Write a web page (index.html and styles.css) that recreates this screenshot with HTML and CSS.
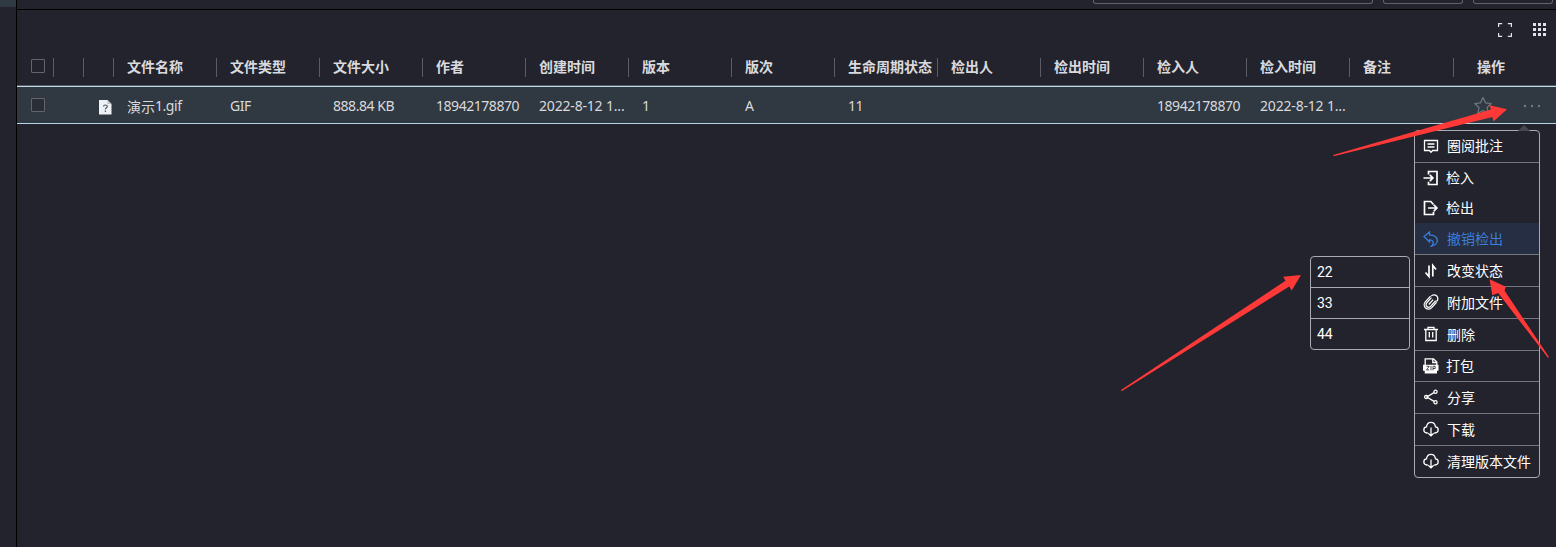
FILE: index.html
```html
<!DOCTYPE html>
<html lang="zh-CN">
<head>
<meta charset="utf-8">
<title>文件列表</title>
<link rel="stylesheet" href="styles.css">
</head>
<body>
<div class="app">
  <aside class="side"><div class="side-active"></div></aside>
  <main class="main">
    <div class="filters"><span class="field field-wide"></span><span class="field"></span><span class="field"></span></div>
    <div class="tools">
      <svg width="14" height="14" viewBox="0 0 14 14" fill="none" stroke="#e2e2e8" stroke-width="1.2"><path d="M.6 4V.6H4.200M9.800.6h3.600V4M13.400 10v3.400H9.800M4.200 13.400H.6V10"/></svg>
      <svg width="14" height="14" viewBox="0 0 14 14" fill="#e2e2e8"><path d="M0 0h3v3H0zM5 0h3v3H5zM10 0h3v3h-3zM0 5h3v3H0zM5 5h3v3H5zM10 5h3v3h-3zM0 10h3v3H0zM5 10h3v3H5zM10 10h3v3h-3z"/></svg>
    </div>
    <div class="grid head">
      <div class="cell check"><i class="box"></i></div><div class="cell"></div><div class="cell"></div>
      <div class="cell">文件名称</div><div class="cell">文件类型</div><div class="cell">文件大小</div><div class="cell">作者</div><div class="cell">创建时间</div><div class="cell">版本</div><div class="cell">版次</div><div class="cell">生命周期状态</div><div class="cell">检出人</div><div class="cell">检出时间</div><div class="cell">检入人</div><div class="cell">检入时间</div><div class="cell">备注</div><div class="cell ops">操作</div>
    </div>
    <div class="grid row">
      <div class="cell check"><i class="box"></i></div><div class="cell"></div>
      <div class="cell file"><svg width="13" height="15" viewBox="0 0 13 15"><path d="M0 0h8.500L12.500 4V14.500H0z" fill="#eef1f6"/><path d="M8.500 0v4h4z" fill="#b9c0c8"/><path d="M4.500 6.500c0-2 3.800-2 3.800 0 0 1.400-1.900 1.300-1.900 2.900M6.400 10.600v1.300" fill="none" stroke="#525b66" stroke-width="1.200"/></svg></div>
      <div class="cell"><span class="zh">演示</span>1.gif</div><div class="cell">GIF</div><div class="cell">888.84 KB</div><div class="cell">18942178870</div><div class="cell date">2022-8-12 1...</div><div class="cell">1</div><div class="cell">A</div><div class="cell">11</div><div class="cell"></div><div class="cell"></div><div class="cell">18942178870</div><div class="cell date">2022-8-12 1...</div><div class="cell"></div>
      <div class="cell actions">
        <svg width="18" height="18" viewBox="0 0 18 18" fill="none" stroke="#747980" stroke-width="1.200" stroke-linejoin="round"><path d="M9 .5l2.500 5.300 5.700.7-4.200 4 1.200 5.800L9 13.500l-5.200 2.800L5 10.500l-4.200-4 5.700-.7z"/></svg>
        <svg width="18" height="4" viewBox="0 0 18 4" fill="#747980"><circle cx="2" cy="2" r="1.200"/><circle cx="9" cy="2" r="1.200"/><circle cx="16" cy="2" r="1.200"/></svg>
      </div>
    </div>
  </main>
</div>

<div class="submenu"><div>22</div><div>33</div><div>44</div></div>

<div class="menu">
  <i class="caret"></i>
  <div class="item line h32 first"><svg class="icon" viewBox="0 0 16 16"><path d="M1.500 2.500h13v10H9.600L8 14.300l-1.600-1.800H1.500zM4.500 6h7M4.500 9h7"/></svg><span>圈阅批注</span></div>
  <div class="item h30 near"><svg class="icon bold" viewBox="0 0 16 16"><path d="M5.500 4.500V1.500H14v13H5.500V11.800M.5 8H9.500M6.800 4.900L9.900 8l-3.100 3.100"/></svg><span>检入</span></div>
  <div class="item h30 near"><svg class="icon bold" viewBox="0 0 16 16"><path d="M10.500 4.500L7.800 1.500H1.500v13h9V11.800M5 8h8.500M10.800 4.900L13.900 8l-3.100 3.100"/></svg><span>检出</span></div>
  <div class="item line h32 active"><svg class="icon" viewBox="0 0 16 16"><path d="M1 5.500L6.500 1v2.800c5.500 0 8.300 3 7.800 6.200-.4 2.600-2.500 4.400-5.800 5 2.700-2.400 2.500-6-2-6.200V11z"/></svg><span>撤销检出</span></div>
  <div class="item line h32"><svg class="icon bold" viewBox="0 0 16 16"><path d="M6 2.500v11L2.500 9.500M9.800 13.500v-11l3.200 4"/></svg><span>改变状态</span></div>
  <div class="item line h32"><svg class="icon up" viewBox="0 0 16 16"><g transform="rotate(42 8 8)"><path d="M5.400 4.500v7a2.600 2.600 0 0 0 5.200 0V3.800"/><path d="M10.600 4v-.5a3.800 3.800 0 0 0-7.600 0" transform="translate(1.200 0)"/><path d="M8 4.800v6.500M12.300 4.500v7.200a4.300 4.300 0 0 1-8.600 0V4"/></g></svg><span>附加文件</span></div>
  <div class="item line h32"><svg class="icon up" viewBox="0 0 16 16"><path d="M1 3.500h14M5 3.300V1.300h6v2M2.800 3.500v11h10.400v-11M6.300 6v5.500M9.700 6v5.500"/></svg><span>删除</span></div>
  <div class="item line h31 near"><svg class="icon" viewBox="0 0 16 16"><path d="M2.200 7V.8h8.300L13.800 4V7M9.800.8v3.700h4"/><path d="M0 6.800h15.500v6H14v2.700H1.700v-2.700H0z" fill="currentColor" stroke="none"/><path class="zip" d="M3.500 8.300h2.700l-2.700 3.600h2.700M8 7.900v4.400M10 12.300v-4h2.200v2.200H10"/></svg><span>打包</span></div>
  <div class="item line h32"><svg class="icon up" viewBox="0 0 16 16"><path d="M11 3.600L3.800 8l7.200 4.400"/><circle cx="12.500" cy="2.800" r="1.600"/><circle cx="3.200" cy="8" r="1.600"/><circle cx="12.500" cy="13.200" r="1.600"/></svg><span>分享</span></div>
  <div class="item line h32"><svg class="icon up" viewBox="0 0 16 16"><path d="M4.800 12H4C-.2 11.600-.1 6.200 3.500 5.900 4.200-.2 11.800-.2 12.500 5.900c3.600.3 3.700 5.700-.5 6.100h-.8M8 6.500V15M5.300 12.200L8 14.900l2.700-2.700"/></svg><span>下载</span></div>
  <div class="item h31"><svg class="icon up" viewBox="0 0 16 16"><path d="M4.800 12H4C-.2 11.600-.1 6.200 3.500 5.900 4.200-.2 11.800-.2 12.500 5.900c3.600.3 3.700 5.700-.5 6.100h-.8M8 6.500V15M5.300 12.200L8 14.900l2.700-2.700"/></svg><span>清理版本文件</span></div>
</div>

<svg class="arrows" width="1556" height="547" viewBox="0 0 1556 547" fill="#ff3838">
  <path d="M1333.200 155L1491 109.500 1489.500 105.200 1507 109.200 1493.500 121.500 1492.300 117 1333.600 156.200z"/>
  <path d="M1121 390L1285.500 280.800 1283.200 276.800 1301 275 1291.700 290.500 1289.200 286.400 1121.700 391.200z"/>
  <path d="M1547.900 357.700L1498.200 293 1492.300 295.200 1489.600 279.200 1505.800 286.800 1504.500 290.600 1549 357z"/>
</svg>
</body>
</html>
```
FILE: styles.css
```css
* { box-sizing: border-box; }
body {
  margin: 0;
  height: 547px;
  overflow: hidden;
  position: relative;
  background: #23232d;
  color: #d9dadd;
  font: 14px/20px "Noto Sans", "Noto Sans CJK SC", sans-serif;
}
.app { display: flex; height: 547px; }
.side { width: 17px; border-right: 1px solid #000; }
.side-active { height: 7px; background: #303a43; }
.main { flex: 1; min-width: 0; }

.filters {
  height: 10px;
  display: flex;
  justify-content: flex-end;
  gap: 10px;
  padding-right: 3px;
  border-bottom: 1px solid #000;
}
.field {
  width: 80px;
  height: 4px;
  border: 1px solid #62626b;
  border-top: 0;
  border-radius: 0 0 3px 3px;
}
.field-wide { width: 280px; }

.tools {
  height: 38px;
  display: flex;
  justify-content: flex-end;
  gap: 21px;
  padding: 13px 9px 0 0;
}

.grid { display: grid; grid-template-columns: 37px 30px 30px repeat(12, 103px) 104px 102px; }
.cell { display: flex; align-items: center; padding-left: 13px; white-space: nowrap; }
.head { height: 38px; padding: 10px 0 9px; font: bold 14px/15px "Noto Sans CJK SC", sans-serif; }
.head .cell { border-right: 1px solid #5c5c65; padding-bottom: 3px; }
.head .ops { border-right: 0; padding-left: 23px; }
.row {
  height: 38px;
  background: #303841;
  border-top: 1px solid #c3d9e4;
  border-bottom: 1px solid #b5d5e5;
  box-shadow: 0 -1px #50606b;
  font-size: 14px;
  letter-spacing: -.46px;
}
.row .cell { padding-top: 1px; }
.row .date { letter-spacing: -.18px; }
.zh { font: 14px/20px "Noto Sans CJK SC", sans-serif; letter-spacing: 0; }
.head .cell.check { padding: 0 0 4px 14px; }
.row .cell.check { padding: 0 0 1px 14px; }
.box { width: 14px; height: 14px; border: 1px solid #65656e; border-radius: 1px; background: #23232d; }
.row .box { background: #292e37; }
.row .cell.file { padding: 5px 0 0 15px; }
.row .actions { padding: 2px 0 0 20px; gap: 31px; }

.menu {
  position: absolute;
  left: 1414px;
  top: 130px;
  width: 126px;
  height: 348px;
  border: 1px solid #a9aab1;
  border-radius: 4px;
  background: #23232d;
  color: #fff;
  font: 14px/20px "Noto Sans CJK SC", sans-serif;
}
.item { display: flex; align-items: center; gap: 8px; padding-left: 8px; white-space: nowrap; }
.item span { padding-bottom: 2px; }
.first { padding-bottom: 1px; }
.near { gap: 7px; }
.line { border-bottom: 1px solid #75767e; }
.h30 { height: 30px; }
.h31 { height: 31px; }
.h32 { height: 32px; }
.active { background: #252e42; color: #3b7ddb; }
.icon { width: 16px; height: 16px; flex: none; fill: none; stroke: currentColor; stroke-width: 1.3; }
.icon.up { margin-bottom: 2px; }
.icon.bold { stroke-width: 1.7; }
.icon .zip { stroke: #23232d; stroke-width: .8; }
.caret {
  position: absolute;
  left: 103px;
  top: -6px;
  border: 6px solid transparent;
  border-top: 0;
  border-bottom-color: #45464e;
}
.submenu {
  position: absolute;
  left: 1310px;
  top: 256px;
  width: 100px;
  height: 94px;
  border: 1px solid #a9aab1;
  border-radius: 4px;
  background: #23232d;
  color: #fff;
  font: 14px/30px Roboto, sans-serif;
}
.submenu div { height: 31px; padding-left: 6px; border-bottom: 1px solid #a9aab1; }
.submenu div:last-child { border-bottom: 0; }
.arrows { position: absolute; left: 0; top: 0; }
```
